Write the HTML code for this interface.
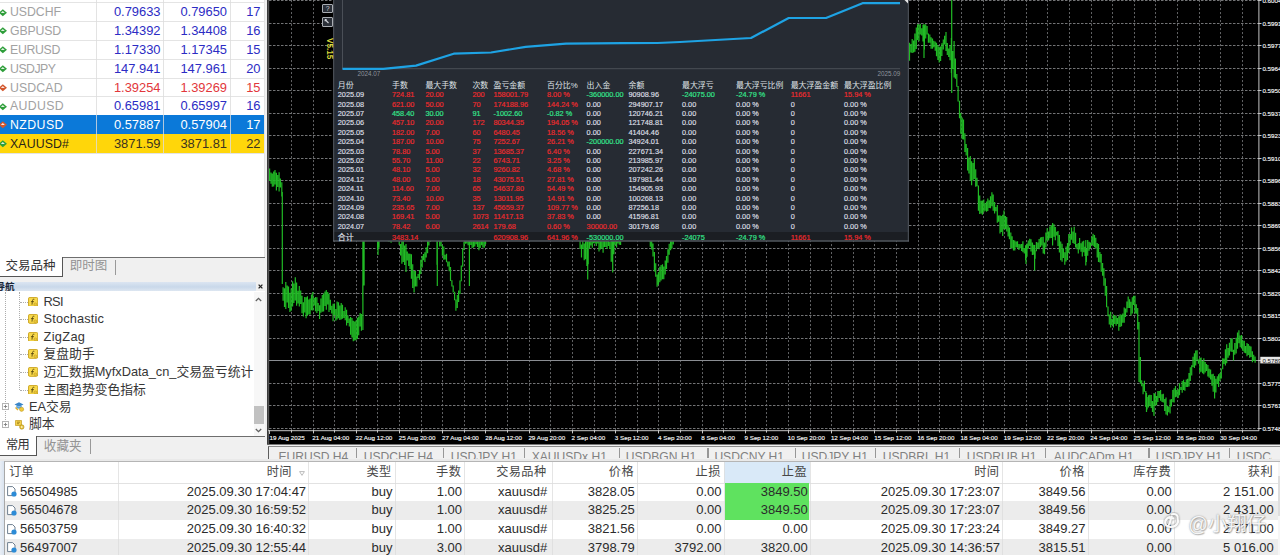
<!DOCTYPE html><html lang="zh-CN"><head><meta charset="utf-8"><title>MT4</title><style>
html,body{margin:0;padding:0}
body{width:1280px;height:555px;overflow:hidden;background:#f0f0f0;position:relative;font-family:'Liberation Sans','Noto Sans CJK SC',sans-serif;-webkit-font-smoothing:antialiased}
i{display:block;position:absolute}
#left{position:absolute;left:0;top:0;width:267px;height:459px;background:#f0f0f0}
#mw{position:absolute;left:0;top:0;width:263.5px;height:257px;background:#fff;overflow:hidden;border-right:1px solid #e3e3e3}
.mr{position:absolute;left:0;width:263.5px;height:18.8px;border-top:1px solid #e4e4e4;box-sizing:border-box;font-size:12.9px;line-height:18.8px;color:#2c2cc4}
.mr .ic{position:absolute;left:-.3px;top:4.3px}
.mr .sy{position:absolute;left:10px;color:#a2a2a2;font-size:12.3px}
.mr .c1{position:absolute;right:103px}
.mr .c2{position:absolute;right:36.5px}
.mr .c3{position:absolute;right:3px}
.rr{color:#e2373b}
.rsel{background:#0b79d9;color:#fff;border-top-color:#0b79d9}
.rsel .sy{color:#fff}
.rgold{background:#ffd60a;color:#3a3320;border-top-color:#ffd60a}
.rgold .sy{color:#2a2418}
.vl{top:0;width:1px;height:153px;background:#dcdcdc;opacity:.8}
#mwend{position:absolute;left:0;top:152.8px;width:263.5px;height:1px;background:#e4e4e4}
#tabs1{position:absolute;left:0;top:257px;width:264.5px;height:24px;background:#f0f0f0;border-top:1.4px solid #6e6e6e;box-sizing:border-box;font-size:12.5px}
#tabs1 .act{position:absolute;left:-1px;top:-1.4px;width:63.8px;height:20.2px;background:#fff;border-right:1.5px solid #555;border-bottom:1.5px solid #555;color:#333;line-height:18.5px;padding-left:6.5px;box-sizing:border-box;letter-spacing:0}
#tabs1 .in{position:absolute;left:69.8px;top:0;color:#939393;line-height:17.5px;letter-spacing:0}
#tabs1 .sp{position:absolute;left:114.5px;top:2px;width:1px;height:15px;background:#999}
#nav{position:absolute;left:0;top:0;width:264.5px;height:459px;pointer-events:none}
.nh{position:absolute;left:0;top:281.5px;width:256px;height:9.5px;background:linear-gradient(#dbe5f1,#c9d8ea 55%,#dde6f1);font-size:9.6px;line-height:9.5px;color:#1a2738}
.nh b{position:absolute;left:-4.5px;top:0}
.nx{position:absolute;left:258px;top:-1.5px;font-size:12px;font-weight:bold;color:#222;line-height:12px}
#navbody{position:absolute;left:0;top:291px;width:264.5px;height:145px;background:#fff}
.tv{width:0;border-left:1px dotted #adadad}
.th{height:0;border-top:1px dotted #adadad}
.fi{position:absolute}
.nt{position:absolute;font-size:12.8px;line-height:18px;color:#363636;white-space:nowrap}
.sb{position:absolute;left:253.5px;top:292px;width:11px;height:144px;background:#f7f7f7}
.sth{position:absolute;left:0.5px;top:113.5px;width:10px;height:18.5px;background:#c1c1c1}
#tabs2{position:absolute;left:0;top:436px;width:264.5px;height:23px;background:#f0f0f0;border-top:1.4px solid #6e6e6e;box-sizing:border-box;font-size:13px}
#tabs2 .act{position:absolute;left:-1px;top:-1.4px;width:37.5px;height:20px;background:#fff;border-right:1.5px solid #555;border-bottom:1.5px solid #555;color:#333;line-height:18.5px;padding-left:7px;box-sizing:border-box;font-size:12.2px;letter-spacing:-.6px}
#tabs2 .in{position:absolute;left:43.8px;top:0.5px;color:#949494;line-height:17px;font-size:12.6px}
#tabs2 .sp{position:absolute;left:90px;top:2px;width:1px;height:15px;background:#999}
#ctabs{position:absolute;left:267.6px;top:445.9px;width:1012.4px;height:12.9px;background:#f0f0f0;border-top:1px solid #8c8c8c;border-left:1.3px solid #5e5e5e;overflow:hidden;font-size:12.1px;color:#818181;box-sizing:border-box}
#ctabs span{position:absolute;top:3.7px;line-height:13px;white-space:nowrap}
#ctabs .sep{top:1.2px;width:1.2px;height:10px;background:#979797}
#term{position:absolute;left:4px;top:461px;width:1276px;height:94px;background:#fff;border-left:1px solid #a8a8a8;border-top:1px solid #b5b5b5;overflow:hidden;box-sizing:border-box}
.thd{position:absolute;left:0;top:0;width:1276px;height:20.5px;border-bottom:1px solid #e2e2e2;font-size:12.2px;color:#484848}
.th2{position:absolute;top:0;height:20.5px;line-height:21.5px;box-sizing:border-box;letter-spacing:.4px}
.th2.hl{background:#d9e9f8}
.tr{position:absolute;left:0;width:1276px;height:18.8px;font-size:13px;color:#2b2b2b}
.tr.alt{background:#ececec}
.td{position:absolute;top:0;height:18.8px;line-height:18.3px;text-align:right;box-sizing:border-box;white-space:nowrap}
.tvl{top:0;width:1px;height:96px;background:#dcdcdc;opacity:.75}
.tsb{position:absolute;left:1273px;top:0;width:3px;height:96px;background:#f6f6f6}
.tsb div{position:absolute;left:0;top:14px;width:3px;height:40px;background:#dedede}
.btn{position:absolute;left:322.3px;width:10.9px;height:9.2px;box-sizing:border-box;border:1px solid #a9adb3;background:#2b3038;border-radius:1px;color:#c9ccd1;font-size:7px;line-height:7px;text-align:center}
#ver{position:absolute;left:324.2px;top:37.6px;width:24px;height:9px;font-size:8.2px;font-weight:bold;line-height:9px;color:#dcdb3e;transform-origin:0 0;transform:translate(9.5px,0) rotate(90deg);letter-spacing:0}
#wm{position:absolute;left:1188.3px;top:510.5px;font-size:19.6px;line-height:26px;color:rgba(255,255,255,.93);text-shadow:0 0 1.5px rgba(90,90,90,.75),1px 1px 1px rgba(120,120,120,.45);white-space:nowrap;letter-spacing:-.3px}
</style></head><body><div id="left"></div><div id="mw"><div class="mr rb" style="top:2.3px"><svg class="ic" width="9" height="9.4" viewBox="0 0 8 10" preserveAspectRatio="none"><path d="M-1 5L2.5 1.2L6.2 5L2.5 8.8Z" fill="#2e9e3a"/><path d="M2.5 3.2L4.3 5.3H0.7Z" fill="#fff" opacity=".85"/></svg><span class="sy" style="letter-spacing:-0.04px">USDCHF</span><span class="c1">0.79633</span><span class="c2">0.79650</span><span class="c3">17</span></div><div class="mr rb" style="top:21.1px"><svg class="ic" width="9" height="9.4" viewBox="0 0 8 10" preserveAspectRatio="none"><path d="M-1 5L2.5 1.2L6.2 5L2.5 8.8Z" fill="#2e9e3a"/><path d="M2.5 3.2L4.3 5.3H0.7Z" fill="#fff" opacity=".85"/></svg><span class="sy" style="letter-spacing:-0.16px">GBPUSD</span><span class="c1">1.34392</span><span class="c2">1.34408</span><span class="c3">16</span></div><div class="mr rb" style="top:39.9px"><svg class="ic" width="9" height="9.4" viewBox="0 0 8 10" preserveAspectRatio="none"><path d="M-1 5L2.5 1.2L6.2 5L2.5 8.8Z" fill="#2e9e3a"/><path d="M2.5 3.2L4.3 5.3H0.7Z" fill="#fff" opacity=".85"/></svg><span class="sy" style="letter-spacing:-0.32px">EURUSD</span><span class="c1">1.17330</span><span class="c2">1.17345</span><span class="c3">15</span></div><div class="mr rb" style="top:58.7px"><svg class="ic" width="9" height="9.4" viewBox="0 0 8 10" preserveAspectRatio="none"><path d="M-1 5L2.5 1.2L6.2 5L2.5 8.8Z" fill="#2e9e3a"/><path d="M2.5 3.2L4.3 5.3H0.7Z" fill="#fff" opacity=".85"/></svg><span class="sy" style="letter-spacing:-0.50px">USDJPY</span><span class="c1">147.941</span><span class="c2">147.961</span><span class="c3">20</span></div><div class="mr rr" style="top:77.5px"><svg class="ic" width="9" height="9.4" viewBox="0 0 8 10" preserveAspectRatio="none"><path d="M-1 5L2.5 1.2L6.2 5L2.5 8.8Z" fill="#d2562c"/><path d="M2.5 3.2L4.3 5.3H0.7Z" fill="#fff" opacity=".85"/></svg><span class="sy" style="letter-spacing:0.13px">USDCAD</span><span class="c1">1.39254</span><span class="c2">1.39269</span><span class="c3">15</span></div><div class="mr rb" style="top:96.3px"><svg class="ic" width="9" height="9.4" viewBox="0 0 8 10" preserveAspectRatio="none"><path d="M-1 5L2.5 1.2L6.2 5L2.5 8.8Z" fill="#2e9e3a"/><path d="M2.5 3.2L4.3 5.3H0.7Z" fill="#fff" opacity=".85"/></svg><span class="sy" style="letter-spacing:0.33px">AUDUSD</span><span class="c1">0.65981</span><span class="c2">0.65997</span><span class="c3">16</span></div><div class="mr rsel" style="top:115.1px"><svg class="ic" width="9" height="9.4" viewBox="0 0 8 10" preserveAspectRatio="none"><path d="M-1 5L2.5 1.2L6.2 5L2.5 8.8Z" fill="#d2562c"/><path d="M2.5 3.2L4.3 5.3H0.7Z" fill="#fff" opacity=".85"/></svg><span class="sy" style="letter-spacing:0.44px">NZDUSD</span><span class="c1">0.57887</span><span class="c2">0.57904</span><span class="c3">17</span></div><div class="mr rgold" style="top:133.9px"><svg class="ic" width="9" height="9.4" viewBox="0 0 8 10" preserveAspectRatio="none"><path d="M-1 5L2.5 1.2L6.2 5L2.5 8.8Z" fill="#2e9e3a"/><path d="M2.5 3.2L4.3 5.3H0.7Z" fill="#fff" opacity=".85"/></svg><span class="sy" style="letter-spacing:0.13px">XAUUSD#</span><span class="c1">3871.59</span><span class="c2">3871.81</span><span class="c3">22</span></div><i class="vl" style="left:96px"></i><i class="vl" style="left:163px"></i><i class="vl" style="left:229.5px"></i></div><div id="mwend"></div><div id="tabs1"><div class="act">交易品种</div><span class="in">即时图</span><i class="sp"></i></div><div id="navbody"></div><div id="nav"><div class="nh"><b>导航</b><svg class="fi" style="left:257.5px;top:2.6px" width="5" height="5" viewBox="0 0 5 5"><path d="M.6 .6L4.4 4.4M4.4 .6L.6 4.4" stroke="#222" stroke-width="1.3"/></svg></div><i class="tv" style="left:5px;top:292px;height:134px"></i><i class="tv" style="left:19px;top:292px;height:98px"></i><i class="th" style="left:20px;top:301.5px;width:8px"></i><svg class="fi" style="left:28px;top:296.5px" width="10.2" height="9.8" viewBox="0 0 11 11" preserveAspectRatio="none"><rect x=".5" y=".5" width="10" height="10" rx="1.5" fill="#f7d84a" stroke="#c9a21c"/><path d="M6.8 2.6C5.4 2.2 4.9 3 4.8 4.2L4.3 8.6M3.2 5.2H6.4" stroke="#5a4a10" stroke-width="1" fill="none"/><circle cx="8" cy="8.2" r="1.6" fill="#e9c53a" stroke="#b8941a" stroke-width=".5"/></svg><span class="nt" style="left:43.5px;top:292.5px;letter-spacing:-0.70px">RSI</span><i class="th" style="left:20px;top:319.1px;width:8px"></i><svg class="fi" style="left:28px;top:314.1px" width="10.2" height="9.8" viewBox="0 0 11 11" preserveAspectRatio="none"><rect x=".5" y=".5" width="10" height="10" rx="1.5" fill="#f7d84a" stroke="#c9a21c"/><path d="M6.8 2.6C5.4 2.2 4.9 3 4.8 4.2L4.3 8.6M3.2 5.2H6.4" stroke="#5a4a10" stroke-width="1" fill="none"/><circle cx="8" cy="8.2" r="1.6" fill="#e9c53a" stroke="#b8941a" stroke-width=".5"/></svg><span class="nt" style="left:43.5px;top:310.1px;letter-spacing:0.15px">Stochastic</span><i class="th" style="left:20px;top:336.7px;width:8px"></i><svg class="fi" style="left:28px;top:331.7px" width="10.2" height="9.8" viewBox="0 0 11 11" preserveAspectRatio="none"><rect x=".5" y=".5" width="10" height="10" rx="1.5" fill="#f7d84a" stroke="#c9a21c"/><path d="M6.8 2.6C5.4 2.2 4.9 3 4.8 4.2L4.3 8.6M3.2 5.2H6.4" stroke="#5a4a10" stroke-width="1" fill="none"/><circle cx="8" cy="8.2" r="1.6" fill="#e9c53a" stroke="#b8941a" stroke-width=".5"/></svg><span class="nt" style="left:43.5px;top:327.7px;letter-spacing:0.33px">ZigZag</span><i class="th" style="left:20px;top:354.3px;width:8px"></i><svg class="fi" style="left:28px;top:349.3px" width="10.2" height="9.8" viewBox="0 0 11 11" preserveAspectRatio="none"><rect x=".5" y=".5" width="10" height="10" rx="1.5" fill="#f7d84a" stroke="#c9a21c"/><path d="M6.8 2.6C5.4 2.2 4.9 3 4.8 4.2L4.3 8.6M3.2 5.2H6.4" stroke="#5a4a10" stroke-width="1" fill="none"/><circle cx="8" cy="8.2" r="1.6" fill="#e9c53a" stroke="#b8941a" stroke-width=".5"/></svg><span class="nt" style="left:43.5px;top:345.3px;letter-spacing:0.00px">复盘助手</span><i class="th" style="left:20px;top:371.9px;width:8px"></i><svg class="fi" style="left:28px;top:366.9px" width="10.2" height="9.8" viewBox="0 0 11 11" preserveAspectRatio="none"><rect x=".5" y=".5" width="10" height="10" rx="1.5" fill="#f7d84a" stroke="#c9a21c"/><path d="M6.8 2.6C5.4 2.2 4.9 3 4.8 4.2L4.3 8.6M3.2 5.2H6.4" stroke="#5a4a10" stroke-width="1" fill="none"/><circle cx="8" cy="8.2" r="1.6" fill="#e9c53a" stroke="#b8941a" stroke-width=".5"/></svg><span class="nt" style="left:43.5px;top:362.9px;letter-spacing:0.00px">迈汇数据MyfxData_cn_交易盈亏统计</span><i class="th" style="left:20px;top:389.5px;width:8px"></i><svg class="fi" style="left:28px;top:384.5px" width="10.2" height="9.8" viewBox="0 0 11 11" preserveAspectRatio="none"><rect x=".5" y=".5" width="10" height="10" rx="1.5" fill="#f7d84a" stroke="#c9a21c"/><path d="M6.8 2.6C5.4 2.2 4.9 3 4.8 4.2L4.3 8.6M3.2 5.2H6.4" stroke="#5a4a10" stroke-width="1" fill="none"/><circle cx="8" cy="8.2" r="1.6" fill="#e9c53a" stroke="#b8941a" stroke-width=".5"/></svg><span class="nt" style="left:43.5px;top:380.5px;letter-spacing:0.00px">主图趋势变色指标</span><svg class="fi" style="left:1.5px;top:403.0px" width="7" height="7" viewBox="0 0 7 7"><rect x=".5" y=".5" width="6" height="6" fill="#fff" stroke="#b4b4b4"/><path d="M1.8 3.5H5.2M3.5 1.8V5.2" stroke="#808080" stroke-width=".9"/></svg><svg class="fi" style="left:14px;top:401.0px" width="11" height="11" viewBox="0 0 11 11"><path d="M0.500 3.600L5 1.200L9.500 3.600L5 5.800Z" fill="#3b86c8"/><path d="M2.300 4.600V6.800C3.600 8 6.400 8 7.700 6.800V4.600L5 6Z" fill="#5aa3dc"/><circle cx="7.600" cy="8.300" r="2.100" fill="#f0c93a" stroke="#b8941a" stroke-width=".5"/><path d="M1.500 6.500l2.500 2.600" stroke="#e0b030" stroke-width="1.400"/></svg><span class="nt" style="left:29px;top:397.5px">EA交易</span><svg class="fi" style="left:1.5px;top:420.8px" width="7" height="7" viewBox="0 0 7 7"><rect x=".5" y=".5" width="6" height="6" fill="#fff" stroke="#b4b4b4"/><path d="M1.8 3.5H5.2M3.5 1.8V5.2" stroke="#808080" stroke-width=".9"/></svg><svg class="fi" style="left:14px;top:418.8px" width="11" height="11" viewBox="0 0 11 11"><path d="M1.500 1.500H7.500V6.500H1.500Z" fill="#f3d04a" stroke="#c29a1c" stroke-width=".7"/><path d="M3 3.200H6M3 4.700H5" stroke="#8a6d10" stroke-width=".7"/><circle cx="7.800" cy="8" r="2.200" fill="#e9c53a" stroke="#a88718" stroke-width=".6"/><circle cx="7.800" cy="8" r=".8" fill="#fff"/></svg><span class="nt" style="left:29px;top:415.3px">脚本</span><div class="sb"><svg width="7" height="5" style="position:absolute;left:1.6px;top:5px" viewBox="0 0 7 5"><path d="M.8 4L3.5 1.3L6.2 4" stroke="#606060" stroke-width="1.3" fill="none"/></svg><div class="sth"></div><svg width="7" height="5" style="position:absolute;left:1.6px;top:136px" viewBox="0 0 7 5"><path d="M.8 1L3.5 3.7L6.2 1" stroke="#606060" stroke-width="1.3" fill="none"/></svg></div></div><div id="tabs2"><div class="act">常用</div><span class="in">收藏夹</span><i class="sp"></i></div><svg class="chart" width="1013" height="444.5" viewBox="267 0 1013 444.5" style="position:absolute;left:267px;top:0"><rect x="267" y="0" width="1013" height="444.5" fill="#000"/><rect x="267.3" y="0" width="1.9" height="444.5" fill="#555"/><path d="M291.5 0V430M313.5 0V430M334.5 0V430M356.5 0V430M377.5 0V430M399.5 0V430M421.5 0V430M442.5 0V430M464.5 0V430M485.5 0V430M507.5 0V430M529.5 0V430M550.5 0V430M572.5 0V430M594.5 0V430M615.5 0V430M637.5 0V430M658.5 0V430M680.5 0V430M702.5 0V430M723.5 0V430M745.5 0V430M766.5 0V430M788.5 0V430M810.5 0V430M831.5 0V430M853.5 0V430M874.5 0V430M896.5 0V430M918.5 0V430M939.5 0V430M961.5 0V430M983.5 0V430M1004.5 0V430M1026.5 0V430M1047.5 0V430M1069.5 0V430M1091.5 0V430M1112.5 0V430M1134.5 0V430M1155.5 0V430M1177.5 0V430M1199.5 0V430M1220.5 0V430M1242.5 0V430" stroke="#5f6062" stroke-width="1" stroke-dasharray="2.1 1.9" fill="none"/><path d="M269 0.5H1258M269 23.5H1258M269 45.5H1258M269 68.5H1258M269 90.5H1258M269 113.5H1258M269 135.5H1258M269 158.5H1258M269 180.5H1258M269 203.5H1258M269 225.5H1258M269 248.5H1258M269 270.5H1258M269 293.5H1258M269 315.5H1258M269 338.5H1258M269 360.5H1258M269 383.5H1258M269 405.5H1258M269 428.5H1258" stroke="#737476" stroke-width="1" stroke-dasharray="2.5 1.5" fill="none"/><path d="M269 360.5H1258" stroke="#8a8d92" stroke-width="1"/><path d="M269.6 168.6V181.0M271.0 172.6V183.8M272.3 173.6V186.8M273.7 171.4V186.6M275.0 170.0V184.5M276.4 172.8V190.6M277.7 175.0V186.9M279.1 172.3V191.6M280.4 178.6V187.6M281.8 182.2V196.4M283.1 287.2V300.8M284.5 288.3V307.0M285.8 282.0V309.0M287.2 285.5V302.6M288.5 286.5V307.9M289.9 292.7V312.0M291.2 288.5V310.7M292.6 281.3V306.6M293.9 283.6V303.0M295.3 277.3V300.6M296.6 282.6V305.8M298.0 290.8V303.4M299.3 286.1V306.4M300.7 290.6V303.9M302.0 295.8V313.2M303.4 302.3V316.4M304.7 296.9V312.6M306.1 297.3V318.2M307.4 296.3V315.8M308.8 299.6V314.4M310.1 298.5V314.5M311.5 294.6V310.3M312.8 292.1V310.6M314.2 298.1V305.4M315.5 297.0V311.3M316.9 297.2V312.9M318.2 302.9V311.1M319.6 305.3V318.9M320.9 298.6V312.7M322.3 295.1V311.7M323.6 293.6V311.5M325.0 291.6V305.9M326.3 290.1V309.7M327.7 292.1V304.5M329.0 293.8V312.0M330.4 299.7V310.1M331.7 305.8V313.5M333.1 303.8V321.2M334.4 303.6V315.3M335.8 309.1V320.7M337.1 301.4V319.5M338.5 302.3V318.2M339.8 305.4V320.0M341.2 303.1V319.5M342.5 304.8V318.8M343.9 310.9V318.1M345.2 307.2V320.3M346.6 309.8V325.4M347.9 315.3V323.0M349.3 318.6V326.4M350.6 316.9V334.7M352.0 318.1V337.4M353.3 320.7V341.3M354.7 321.6V340.5M356.0 320.6V340.3M357.4 317.7V339.0M358.7 316.4V335.2M360.1 312.9V326.6M361.4 314.1V330.7M362.8 284.6V300.2M364.1 231.0V285.4M376.3 233.9V237.1M377.6 233.8V249.7M379.0 231.1V247.8M380.3 230.6V239.6M388.4 233.9V241.6M389.8 232.0V241.4M391.1 232.4V242.8M392.5 231.4V240.0M399.2 236.4V244.7M400.6 243.9V255.5M401.9 238.9V263.7M403.3 240.0V262.0M404.6 245.5V265.1M406.0 243.9V272.0M407.3 251.6V260.5M408.7 253.4V265.9M410.0 253.7V268.9M411.4 254.3V278.7M412.7 264.2V288.0M414.1 271.0V292.6M415.4 271.1V286.6M416.8 276.5V286.6M418.1 273.9V278.1M419.5 270.1V279.8M420.8 259.7V274.1M422.2 256.1V267.5M423.5 253.9V260.3M424.9 252.2V261.9M426.2 247.3V257.6M427.6 240.6V253.3M428.9 241.2V245.6M430.3 234.5V242.0M437.0 235.8V264.7M438.4 234.6V241.3M439.7 240.3V246.4M441.1 238.9V246.3M442.4 245.3V255.8M443.8 246.4V259.7M445.1 254.8V259.5M446.5 253.8V262.2M447.8 261.4V266.6M449.2 261.5V271.2M450.5 267.0V281.1M451.9 280.3V286.4M453.2 285.6V292.6M454.6 291.8V300.3M455.9 299.5V310.7M457.3 295.1V307.9M458.6 290.6V301.9M460.0 280.4V294.1M461.3 265.4V281.2M462.7 249.0V266.8M464.0 241.6V250.1M465.4 236.6V243.7M466.7 235.5V243.4M468.1 235.5V245.3M469.4 240.8V285.0M470.8 236.0V244.9M472.1 236.2V247.9M473.5 239.2V247.6M474.8 236.7V246.6M476.2 237.6V244.2M477.5 236.1V247.1M478.9 236.5V250.2M480.2 239.6V248.1M481.6 237.9V245.3M482.9 240.5V247.4M484.3 238.3V247.8M485.6 235.8V244.2M487.0 231.2V238.9M578.8 233.3V240.5M580.1 239.5V249.1M581.5 244.4V257.4M582.8 239.1V249.0M584.2 243.5V260.2M585.5 236.2V259.3M586.9 236.7V266.1M588.2 237.4V264.3M589.6 241.2V248.6M590.9 236.2V245.6M592.3 238.4V247.8M593.6 240.0V243.3M595.0 236.3V243.4M596.3 236.9V245.9M597.7 240.4V243.5M599.0 236.3V251.5M600.4 237.8V249.4M601.7 236.3V248.4M603.1 239.9V252.8M604.4 237.8V246.9M605.8 236.0V247.1M607.1 238.7V248.9M608.5 236.1V246.1M609.8 241.9V248.9M611.2 239.2V261.8M612.5 238.4V262.3M613.9 237.0V254.2M615.2 237.2V244.8M616.6 239.5V247.4M617.9 236.2V243.4M619.3 237.7V244.7M620.6 234.3V244.9M622.0 232.3V239.3M649.0 234.1V241.2M650.3 239.4V246.8M651.7 238.0V249.5M653.0 243.4V256.6M654.4 252.1V271.5M655.7 263.2V276.8M657.1 274.4V286.8M658.4 272.2V284.7M659.8 266.8V282.3M661.1 264.9V280.5M662.5 264.3V279.2M663.8 266.4V279.2M665.2 260.4V274.4M666.5 255.9V269.0M667.9 249.2V262.7M669.2 243.8V254.7M670.6 237.2V250.2M671.9 240.6V248.4M673.3 237.9V244.6M674.6 232.3V238.7M909.5 42.8V60.7M910.9 44.0V52.5M912.2 39.0V53.0M913.6 40.4V52.6M914.9 33.6V51.7M916.3 27.5V49.0M917.6 24.3V40.1M919.0 24.6V41.2M920.3 23.7V34.4M921.7 28.2V35.5M923.0 24.8V41.4M924.4 25.3V49.5M925.7 24.2V38.6M927.1 26.0V34.4M928.4 33.6V42.8M929.8 34.6V42.8M931.1 37.3V48.7M932.5 38.5V48.7M933.8 40.7V47.2M935.2 41.4V50.7M936.5 42.8V56.2M937.9 44.9V60.1M939.2 46.8V62.6M940.6 46.6V61.1M941.9 43.3V55.9M943.3 39.4V49.6M944.6 35.7V44.4M946.0 32.1V51.1M947.3 43.1V55.0M948.7 48.6V56.9M950.0 45.4V60.3M951.4 37.9V73.0M952.7 51.1V69.0M954.1 41.0V77.6M955.4 58.4V78.7M956.8 73.9V86.7M958.1 85.9V101.5M959.5 100.7V118.3M960.8 113.1V133.7M962.2 117.4V139.3M963.5 119.5V139.6M964.9 133.2V151.9M966.2 144.1V155.6M967.6 148.0V170.5M968.9 157.4V173.6M970.3 155.9V180.4M971.6 161.2V185.3M973.0 163.0V180.6M974.3 159.0V179.0M975.7 169.2V186.7M977.0 177.8V186.2M978.4 185.4V210.8M979.7 195.5V214.1M981.1 200.8V213.4M982.4 200.5V214.7M983.8 199.4V212.3M985.1 203.2V210.8M986.5 201.4V211.7M987.8 198.6V211.1M989.2 200.2V207.9M990.5 196.3V208.3M991.9 192.2V206.2M993.2 194.6V210.7M994.6 202.1V213.5M995.9 207.1V211.2M997.3 204.9V222.8M998.6 215.5V221.7M1000.0 215.2V233.6M1001.3 216.0V232.1M1002.7 214.7V235.9M1004.0 210.6V229.3M1005.4 216.0V229.3M1006.7 217.0V231.6M1008.1 224.8V236.4M1009.4 227.6V239.2M1010.8 232.6V248.0M1012.1 236.2V248.5M1013.5 240.1V250.6M1014.8 240.5V250.4M1016.2 241.4V247.3M1017.5 241.2V247.8M1018.9 244.1V249.9M1020.2 244.3V248.3M1021.6 244.0V251.1M1022.9 241.2V252.2M1024.3 248.0V253.5M1025.6 245.6V260.3M1027.0 243.4V256.7M1028.3 240.5V248.8M1029.7 238.8V246.0M1031.0 239.3V251.5M1032.4 242.5V255.1M1033.7 244.7V254.7M1035.1 250.5V258.7M1036.4 242.0V251.3M1037.8 242.4V248.4M1039.1 239.0V249.3M1040.5 237.6V247.1M1041.8 237.0V245.6M1043.2 236.7V253.5M1044.5 242.6V254.3M1045.9 232.5V247.5M1047.2 228.3V240.6M1048.6 231.4V240.6M1049.9 226.5V238.3M1051.3 225.3V237.9M1052.6 223.1V245.5M1054.0 224.3V236.7M1055.3 227.0V240.2M1056.7 231.7V235.6M1058.0 231.0V246.0M1059.4 234.9V252.6M1060.7 241.6V260.2M1062.1 243.7V261.8M1063.4 248.5V258.1M1064.8 252.2V264.7M1066.1 246.6V261.5M1067.5 242.9V259.9M1068.8 233.9V253.0M1070.2 234.1V245.0M1071.5 227.6V239.7M1072.9 231.6V242.9M1074.2 226.8V244.1M1075.6 232.8V247.6M1076.9 244.0V249.2M1078.3 243.1V253.6M1079.6 237.9V249.5M1081.0 243.2V251.7M1082.3 241.5V256.4M1083.7 240.8V252.2M1085.0 246.7V255.9M1086.4 249.1V262.0M1087.7 240.1V255.8M1089.1 241.8V250.8M1090.4 242.4V247.9M1091.8 236.5V245.0M1093.1 233.7V246.1M1094.5 234.9V247.2M1095.8 237.7V248.6M1097.2 243.1V257.5M1098.5 243.9V261.9M1099.9 252.0V262.5M1101.2 254.1V271.8M1102.6 262.9V275.8M1103.9 268.3V285.7M1105.3 278.2V295.8M1106.6 286.1V307.3M1108.0 306.5V316.3M1109.3 314.6V324.4M1110.7 311.7V327.5M1112.0 319.1V325.0M1113.4 314.4V327.5M1114.7 315.7V324.1M1116.1 315.6V325.7M1117.4 317.9V324.0M1118.8 316.2V330.7M1120.1 314.2V327.0M1121.5 314.8V326.3M1122.8 313.6V322.8M1124.2 307.6V322.7M1125.5 308.5V316.9M1126.9 301.5V312.5M1128.2 296.6V307.9M1129.6 299.3V308.0M1130.9 301.8V315.5M1132.3 297.2V313.6M1133.6 295.7V305.0M1135.0 295.8V313.6M1136.3 304.3V313.8M1137.7 308.1V329.6M1139.0 337.5V357.9M1140.4 357.1V383.8M1141.7 380.3V386.3M1143.1 383.9V394.2M1144.4 380.8V391.8M1145.8 391.0V407.0M1147.1 397.1V409.5M1148.5 395.2V407.4M1149.8 394.8V406.0M1151.2 394.9V408.1M1152.5 401.0V412.1M1153.9 402.2V415.1M1155.2 393.8V405.7M1156.6 396.1V405.2M1157.9 390.9V402.0M1159.3 391.1V398.0M1160.6 390.1V400.7M1162.0 394.3V402.1M1163.3 393.8V402.4M1164.7 399.0V411.0M1166.0 397.4V414.4M1167.4 406.0V415.5M1168.7 406.5V412.2M1170.1 399.6V413.5M1171.4 399.0V406.5M1172.8 389.9V402.2M1174.1 388.3V402.6M1175.5 385.9V397.2M1176.8 390.1V396.7M1178.2 389.2V397.9M1179.5 383.2V395.3M1180.9 387.0V390.1M1182.2 381.1V392.7M1183.6 379.7V389.9M1184.9 381.9V390.7M1186.3 379.4V387.1M1187.6 378.8V386.9M1189.0 373.1V386.6M1190.3 367.2V380.9M1191.7 365.3V375.6M1193.0 356.8V366.9M1194.4 353.3V368.0M1195.7 350.5V365.5M1197.1 350.2V360.4M1198.4 359.4V363.8M1199.8 357.9V372.6M1201.1 357.4V371.8M1202.5 361.0V373.3M1203.8 358.2V374.2M1205.2 362.1V372.5M1206.5 364.1V370.9M1207.9 365.0V376.5M1209.2 368.7V377.7M1210.6 369.4V379.5M1211.9 374.2V385.8M1213.2 373.7V391.8M1214.6 376.0V390.8M1215.9 378.7V392.6M1217.3 376.3V384.0M1218.6 374.2V387.0M1220.0 373.0V381.1M1221.3 368.4V378.5M1222.7 358.3V369.2M1224.0 358.4V363.9M1225.4 349.2V365.6M1226.7 344.3V363.2M1228.1 348.1V357.8M1229.4 342.7V355.6M1230.8 338.7V351.6M1232.1 338.3V352.1M1233.5 349.7V360.5M1234.8 342.9V354.7M1236.2 337.7V353.4M1237.5 332.4V348.7M1238.9 330.2V343.2M1240.2 335.4V347.3M1241.6 335.1V348.6M1242.9 340.5V351.0M1244.3 340.8V352.8M1245.6 345.9V353.2M1247.0 343.0V356.2M1248.3 344.1V355.1M1249.7 345.8V357.8M1251.0 346.4V357.1M1252.4 351.2V362.3M1253.7 354.7V361.1M1255.1 356.4V362.8M951.7 0.0V93.0M924.0 24.0V58.0M437.3 238.0V286.0M469.4 238.0V286.0M587.7 238.0V279.5M612.7 238.0V272.5M1026.0 245.0V264.0M1034.6 245.0V270.5M282.3 192.0V284.0M362.9 238.0V330.0M1139.0 322.0V382.0M1214.6 376.0V398.4M1146.5 393.0V412.0M1154.0 393.0V416.0M1085.8 240.0V265.5M378.0 236.0V255.0" stroke="#21bb25" stroke-width="1.2" fill="none" style="filter:blur(0.3px)"/><path d="M1258.9 0V431M268 430.7H1259" stroke="#c4c4c4" stroke-width="1"/><path d="M1258 0.5h3.5M1258 23.5h3.5M1258 45.5h3.5M1258 68.5h3.5M1258 90.5h3.5M1258 113.5h3.5M1258 135.5h3.5M1258 158.5h3.5M1258 180.5h3.5M1258 203.5h3.5M1258 225.5h3.5M1258 248.5h3.5M1258 270.5h3.5M1258 293.5h3.5M1258 315.5h3.5M1258 338.5h3.5M1258 360.5h3.5M1258 383.5h3.5M1258 405.5h3.5M1258 428.5h3.5M291.5 430v2.6M313.5 430v3.4M334.5 430v2.6M356.5 430v3.4M377.5 430v2.6M399.5 430v3.4M421.5 430v2.6M442.5 430v3.4M464.5 430v2.6M485.5 430v3.4M507.5 430v2.6M529.5 430v3.4M550.5 430v2.6M572.5 430v3.4M594.5 430v2.6M615.5 430v3.4M637.5 430v2.6M658.5 430v3.4M680.5 430v2.6M702.5 430v3.4M723.5 430v2.6M745.5 430v3.4M766.5 430v2.6M788.5 430v3.4M810.5 430v2.6M831.5 430v3.4M853.5 430v2.6M874.5 430v3.4M896.5 430v2.6M918.5 430v3.4M939.5 430v2.6M961.5 430v3.4M983.5 430v2.6M1004.5 430v3.4M1026.5 430v2.6M1047.5 430v3.4M1069.5 430v2.6M1091.5 430v3.4M1112.5 430v2.6M1134.5 430v3.4M1155.5 430v2.6M1177.5 430v3.4M1199.5 430v2.6M1220.5 430v3.4M1242.5 430v2.6M269.5 430v4" stroke="#c8c8c8" stroke-width="1"/><g font-family="Liberation Sans,sans-serif" font-size="6.25" fill="#f6f6f6" stroke="#f6f6f6" stroke-width=".15"><text x="1262.4" y="2.9">0.6004</text><text x="1262.4" y="25.9">0.5991</text><text x="1262.4" y="47.9">0.5977</text><text x="1262.4" y="70.9">0.5964</text><text x="1262.4" y="92.9">0.5950</text><text x="1262.4" y="115.9">0.5937</text><text x="1262.4" y="137.9">0.5923</text><text x="1262.4" y="160.9">0.5910</text><text x="1262.4" y="182.9">0.5896</text><text x="1262.4" y="205.9">0.5883</text><text x="1262.4" y="227.9">0.5869</text><text x="1262.4" y="250.9">0.5856</text><text x="1262.4" y="272.9">0.5842</text><text x="1262.4" y="295.9">0.5829</text><text x="1262.4" y="317.9">0.5815</text><text x="1262.4" y="340.9">0.5802</text><text x="1262.4" y="385.9">0.5775</text><text x="1262.4" y="407.9">0.5761</text><text x="1262.4" y="430.9">0.5748</text><text x="269.6" y="439.5">19 Aug 2025</text><text x="312.3" y="439.5">21 Aug 04:00</text><text x="355.5" y="439.5">22 Aug 12:00</text><text x="398.7" y="439.5">25 Aug 20:00</text><text x="442.0" y="439.5">27 Aug 04:00</text><text x="485.2" y="439.5">28 Aug 12:00</text><text x="528.4" y="439.5">29 Aug 20:00</text><text x="571.6" y="439.5">2 Sep 04:00</text><text x="614.8" y="439.5">3 Sep 12:00</text><text x="658.1" y="439.5">4 Sep 20:00</text><text x="701.3" y="439.5">8 Sep 04:00</text><text x="744.5" y="439.5">9 Sep 12:00</text><text x="787.7" y="439.5">10 Sep 20:00</text><text x="830.9" y="439.5">12 Sep 04:00</text><text x="874.2" y="439.5">15 Sep 12:00</text><text x="917.4" y="439.5">16 Sep 20:00</text><text x="960.6" y="439.5">18 Sep 04:00</text><text x="1003.8" y="439.5">19 Sep 12:00</text><text x="1047.0" y="439.5">22 Sep 20:00</text><text x="1090.3" y="439.5">24 Sep 04:00</text><text x="1133.5" y="439.5">25 Sep 12:00</text><text x="1176.7" y="439.5">26 Sep 20:00</text><text x="1219.9" y="439.5">30 Sep 04:00</text></g><rect x="1260.3" y="356.8" width="20" height="6.6" fill="#e6e6e6"/><text x="1262.4" y="362.6" font-family="Liberation Sans,sans-serif" font-size="6.25" fill="#111">0.5789</text></svg><svg width="576" height="242" viewBox="333 0 576 242" style="position:absolute;left:333px;top:0"><rect x="333" y="0" width="576" height="241.3" fill="#262b33"/><rect x="333" y="232" width="576" height="9.3" fill="#1b1e23"/><path d="M333.7 0V241.3M908.3 0V241.3" stroke="#50555d" stroke-width="1"/><path d="M333 241H909" stroke="#6b7078" stroke-width="1"/><path d="M342.5 0V69M342.5 68.7H900" stroke="#4a4f57" stroke-width="1" fill="none"/><polyline points="342.5,68.9 383.4,68.9 416.0,65.6 453.7,53.7 491.0,52.5 525.6,46.9 566.0,43.7 622.5,43.1 657.5,43.0 680.0,42.0 751.0,38.0 788.7,18.0 826.0,18.0 862.5,3.2 900.0,3.2" fill="none" stroke="#1ea3e4" stroke-width="2.2" stroke-linejoin="round"/><g font-family="Liberation Sans,Noto Sans CJK SC,sans-serif" font-size="6.3" fill="#8d939b"><text x="357.5" y="75.8">2024.07</text><text x="877.5" y="75.8">2025.09</text></g><g font-family="Liberation Sans,Noto Sans CJK SC,sans-serif" font-size="7.3" stroke-width=".18"><text x="337.8" y="87.6" fill="#dfe2e6" font-size="7.9">月份</text><text x="392.0" y="87.6" fill="#dfe2e6" font-size="7.9">手数</text><text x="425.4" y="87.6" fill="#dfe2e6" font-size="7.9">最大手数</text><text x="472.4" y="87.6" fill="#dfe2e6" font-size="7.9">次数</text><text x="493.5" y="87.6" fill="#dfe2e6" font-size="7.9">盈亏金额</text><text x="547.0" y="87.6" fill="#dfe2e6" font-size="7.9">百分比%</text><text x="586.6" y="87.6" fill="#dfe2e6" font-size="7.9">出入金</text><text x="628.5" y="87.6" fill="#dfe2e6" font-size="7.9">余额</text><text x="682.0" y="87.6" fill="#dfe2e6" font-size="7.9">最大浮亏</text><text x="736.0" y="87.6" fill="#dfe2e6" font-size="7.9">最大浮亏比例</text><text x="790.7" y="87.6" fill="#dfe2e6" font-size="7.9">最大浮盈金额</text><text x="844.0" y="87.6" fill="#dfe2e6" font-size="7.9">最大浮盈比例</text><text x="337.8" y="97.1" fill="#dadde1" stroke="#dadde1">2025.09</text><text x="392.0" y="97.1" fill="#ee2a2e" stroke="#ee2a2e">724.81</text><text x="425.4" y="97.1" fill="#ee2a2e" stroke="#ee2a2e">20.00</text><text x="472.4" y="97.1" fill="#ee2a2e" stroke="#ee2a2e">200</text><text x="493.5" y="97.1" fill="#ee2a2e" stroke="#ee2a2e">158001.79</text><text x="547.0" y="97.1" fill="#ee2a2e" stroke="#ee2a2e">8.00 %</text><text x="586.6" y="97.1" fill="#35e58d" stroke="#35e58d">-360000.00</text><text x="628.5" y="97.1" fill="#dadde1" stroke="#dadde1">90908.96</text><text x="682.0" y="97.1" fill="#35e58d" stroke="#35e58d">-24075.00</text><text x="736.0" y="97.1" fill="#35e58d" stroke="#35e58d">-24.79 %</text><text x="790.7" y="97.1" fill="#ee2a2e" stroke="#ee2a2e">11661</text><text x="844.0" y="97.1" fill="#ee2a2e" stroke="#ee2a2e">15.94 %</text><text x="337.8" y="106.5" fill="#dadde1" stroke="#dadde1">2025.08</text><text x="392.0" y="106.5" fill="#ee2a2e" stroke="#ee2a2e">621.00</text><text x="425.4" y="106.5" fill="#ee2a2e" stroke="#ee2a2e">50.00</text><text x="472.4" y="106.5" fill="#ee2a2e" stroke="#ee2a2e">70</text><text x="493.5" y="106.5" fill="#ee2a2e" stroke="#ee2a2e">174188.96</text><text x="547.0" y="106.5" fill="#ee2a2e" stroke="#ee2a2e">144.24 %</text><text x="586.6" y="106.5" fill="#dadde1" stroke="#dadde1">0.00</text><text x="628.5" y="106.5" fill="#dadde1" stroke="#dadde1">294907.17</text><text x="682.0" y="106.5" fill="#dadde1" stroke="#dadde1">0.00</text><text x="736.0" y="106.5" fill="#dadde1" stroke="#dadde1">0.00 %</text><text x="790.7" y="106.5" fill="#dadde1" stroke="#dadde1">0</text><text x="844.0" y="106.5" fill="#dadde1" stroke="#dadde1">0.00 %</text><text x="337.8" y="115.9" fill="#dadde1" stroke="#dadde1">2025.07</text><text x="392.0" y="115.9" fill="#35e58d" stroke="#35e58d">458.40</text><text x="425.4" y="115.9" fill="#35e58d" stroke="#35e58d">30.00</text><text x="472.4" y="115.9" fill="#35e58d" stroke="#35e58d">91</text><text x="493.5" y="115.9" fill="#35e58d" stroke="#35e58d">-1002.60</text><text x="547.0" y="115.9" fill="#35e58d" stroke="#35e58d">-0.82 %</text><text x="586.6" y="115.9" fill="#dadde1" stroke="#dadde1">0.00</text><text x="628.5" y="115.9" fill="#dadde1" stroke="#dadde1">120746.21</text><text x="682.0" y="115.9" fill="#dadde1" stroke="#dadde1">0.00</text><text x="736.0" y="115.9" fill="#dadde1" stroke="#dadde1">0.00 %</text><text x="790.7" y="115.9" fill="#dadde1" stroke="#dadde1">0</text><text x="844.0" y="115.9" fill="#dadde1" stroke="#dadde1">0.00 %</text><text x="337.8" y="125.3" fill="#dadde1" stroke="#dadde1">2025.06</text><text x="392.0" y="125.3" fill="#ee2a2e" stroke="#ee2a2e">457.10</text><text x="425.4" y="125.3" fill="#ee2a2e" stroke="#ee2a2e">20.00</text><text x="472.4" y="125.3" fill="#ee2a2e" stroke="#ee2a2e">172</text><text x="493.5" y="125.3" fill="#ee2a2e" stroke="#ee2a2e">80344.35</text><text x="547.0" y="125.3" fill="#ee2a2e" stroke="#ee2a2e">194.05 %</text><text x="586.6" y="125.3" fill="#dadde1" stroke="#dadde1">0.00</text><text x="628.5" y="125.3" fill="#dadde1" stroke="#dadde1">121748.81</text><text x="682.0" y="125.3" fill="#dadde1" stroke="#dadde1">0.00</text><text x="736.0" y="125.3" fill="#dadde1" stroke="#dadde1">0.00 %</text><text x="790.7" y="125.3" fill="#dadde1" stroke="#dadde1">0</text><text x="844.0" y="125.3" fill="#dadde1" stroke="#dadde1">0.00 %</text><text x="337.8" y="134.7" fill="#dadde1" stroke="#dadde1">2025.05</text><text x="392.0" y="134.7" fill="#ee2a2e" stroke="#ee2a2e">182.00</text><text x="425.4" y="134.7" fill="#ee2a2e" stroke="#ee2a2e">7.00</text><text x="472.4" y="134.7" fill="#ee2a2e" stroke="#ee2a2e">60</text><text x="493.5" y="134.7" fill="#ee2a2e" stroke="#ee2a2e">6480.45</text><text x="547.0" y="134.7" fill="#ee2a2e" stroke="#ee2a2e">18.56 %</text><text x="586.6" y="134.7" fill="#dadde1" stroke="#dadde1">0.00</text><text x="628.5" y="134.7" fill="#dadde1" stroke="#dadde1">41404.46</text><text x="682.0" y="134.7" fill="#dadde1" stroke="#dadde1">0.00</text><text x="736.0" y="134.7" fill="#dadde1" stroke="#dadde1">0.00 %</text><text x="790.7" y="134.7" fill="#dadde1" stroke="#dadde1">0</text><text x="844.0" y="134.7" fill="#dadde1" stroke="#dadde1">0.00 %</text><text x="337.8" y="144.1" fill="#dadde1" stroke="#dadde1">2025.04</text><text x="392.0" y="144.1" fill="#ee2a2e" stroke="#ee2a2e">187.00</text><text x="425.4" y="144.1" fill="#ee2a2e" stroke="#ee2a2e">10.00</text><text x="472.4" y="144.1" fill="#ee2a2e" stroke="#ee2a2e">75</text><text x="493.5" y="144.1" fill="#ee2a2e" stroke="#ee2a2e">7252.67</text><text x="547.0" y="144.1" fill="#ee2a2e" stroke="#ee2a2e">26.21 %</text><text x="586.6" y="144.1" fill="#35e58d" stroke="#35e58d">-200000.00</text><text x="628.5" y="144.1" fill="#dadde1" stroke="#dadde1">34924.01</text><text x="682.0" y="144.1" fill="#dadde1" stroke="#dadde1">0.00</text><text x="736.0" y="144.1" fill="#dadde1" stroke="#dadde1">0.00 %</text><text x="790.7" y="144.1" fill="#dadde1" stroke="#dadde1">0</text><text x="844.0" y="144.1" fill="#dadde1" stroke="#dadde1">0.00 %</text><text x="337.8" y="153.6" fill="#dadde1" stroke="#dadde1">2025.03</text><text x="392.0" y="153.6" fill="#ee2a2e" stroke="#ee2a2e">78.80</text><text x="425.4" y="153.6" fill="#ee2a2e" stroke="#ee2a2e">5.00</text><text x="472.4" y="153.6" fill="#ee2a2e" stroke="#ee2a2e">37</text><text x="493.5" y="153.6" fill="#ee2a2e" stroke="#ee2a2e">13685.37</text><text x="547.0" y="153.6" fill="#ee2a2e" stroke="#ee2a2e">6.40 %</text><text x="586.6" y="153.6" fill="#dadde1" stroke="#dadde1">0.00</text><text x="628.5" y="153.6" fill="#dadde1" stroke="#dadde1">227671.34</text><text x="682.0" y="153.6" fill="#dadde1" stroke="#dadde1">0.00</text><text x="736.0" y="153.6" fill="#dadde1" stroke="#dadde1">0.00 %</text><text x="790.7" y="153.6" fill="#dadde1" stroke="#dadde1">0</text><text x="844.0" y="153.6" fill="#dadde1" stroke="#dadde1">0.00 %</text><text x="337.8" y="163.0" fill="#dadde1" stroke="#dadde1">2025.02</text><text x="392.0" y="163.0" fill="#ee2a2e" stroke="#ee2a2e">55.70</text><text x="425.4" y="163.0" fill="#ee2a2e" stroke="#ee2a2e">11.00</text><text x="472.4" y="163.0" fill="#ee2a2e" stroke="#ee2a2e">22</text><text x="493.5" y="163.0" fill="#ee2a2e" stroke="#ee2a2e">6743.71</text><text x="547.0" y="163.0" fill="#ee2a2e" stroke="#ee2a2e">3.25 %</text><text x="586.6" y="163.0" fill="#dadde1" stroke="#dadde1">0.00</text><text x="628.5" y="163.0" fill="#dadde1" stroke="#dadde1">213985.97</text><text x="682.0" y="163.0" fill="#dadde1" stroke="#dadde1">0.00</text><text x="736.0" y="163.0" fill="#dadde1" stroke="#dadde1">0.00 %</text><text x="790.7" y="163.0" fill="#dadde1" stroke="#dadde1">0</text><text x="844.0" y="163.0" fill="#dadde1" stroke="#dadde1">0.00 %</text><text x="337.8" y="172.4" fill="#dadde1" stroke="#dadde1">2025.01</text><text x="392.0" y="172.4" fill="#ee2a2e" stroke="#ee2a2e">48.10</text><text x="425.4" y="172.4" fill="#ee2a2e" stroke="#ee2a2e">5.00</text><text x="472.4" y="172.4" fill="#ee2a2e" stroke="#ee2a2e">32</text><text x="493.5" y="172.4" fill="#ee2a2e" stroke="#ee2a2e">9260.82</text><text x="547.0" y="172.4" fill="#ee2a2e" stroke="#ee2a2e">4.68 %</text><text x="586.6" y="172.4" fill="#dadde1" stroke="#dadde1">0.00</text><text x="628.5" y="172.4" fill="#dadde1" stroke="#dadde1">207242.26</text><text x="682.0" y="172.4" fill="#dadde1" stroke="#dadde1">0.00</text><text x="736.0" y="172.4" fill="#dadde1" stroke="#dadde1">0.00 %</text><text x="790.7" y="172.4" fill="#dadde1" stroke="#dadde1">0</text><text x="844.0" y="172.4" fill="#dadde1" stroke="#dadde1">0.00 %</text><text x="337.8" y="181.8" fill="#dadde1" stroke="#dadde1">2024.12</text><text x="392.0" y="181.8" fill="#ee2a2e" stroke="#ee2a2e">48.00</text><text x="425.4" y="181.8" fill="#ee2a2e" stroke="#ee2a2e">5.00</text><text x="472.4" y="181.8" fill="#ee2a2e" stroke="#ee2a2e">18</text><text x="493.5" y="181.8" fill="#ee2a2e" stroke="#ee2a2e">43075.51</text><text x="547.0" y="181.8" fill="#ee2a2e" stroke="#ee2a2e">27.81 %</text><text x="586.6" y="181.8" fill="#dadde1" stroke="#dadde1">0.00</text><text x="628.5" y="181.8" fill="#dadde1" stroke="#dadde1">197981.44</text><text x="682.0" y="181.8" fill="#dadde1" stroke="#dadde1">0.00</text><text x="736.0" y="181.8" fill="#dadde1" stroke="#dadde1">0.00 %</text><text x="790.7" y="181.8" fill="#dadde1" stroke="#dadde1">0</text><text x="844.0" y="181.8" fill="#dadde1" stroke="#dadde1">0.00 %</text><text x="337.8" y="191.2" fill="#dadde1" stroke="#dadde1">2024.11</text><text x="392.0" y="191.2" fill="#ee2a2e" stroke="#ee2a2e">114.60</text><text x="425.4" y="191.2" fill="#ee2a2e" stroke="#ee2a2e">7.00</text><text x="472.4" y="191.2" fill="#ee2a2e" stroke="#ee2a2e">65</text><text x="493.5" y="191.2" fill="#ee2a2e" stroke="#ee2a2e">54637.80</text><text x="547.0" y="191.2" fill="#ee2a2e" stroke="#ee2a2e">54.49 %</text><text x="586.6" y="191.2" fill="#dadde1" stroke="#dadde1">0.00</text><text x="628.5" y="191.2" fill="#dadde1" stroke="#dadde1">154905.93</text><text x="682.0" y="191.2" fill="#dadde1" stroke="#dadde1">0.00</text><text x="736.0" y="191.2" fill="#dadde1" stroke="#dadde1">0.00 %</text><text x="790.7" y="191.2" fill="#dadde1" stroke="#dadde1">0</text><text x="844.0" y="191.2" fill="#dadde1" stroke="#dadde1">0.00 %</text><text x="337.8" y="200.6" fill="#dadde1" stroke="#dadde1">2024.10</text><text x="392.0" y="200.6" fill="#ee2a2e" stroke="#ee2a2e">73.40</text><text x="425.4" y="200.6" fill="#ee2a2e" stroke="#ee2a2e">10.00</text><text x="472.4" y="200.6" fill="#ee2a2e" stroke="#ee2a2e">35</text><text x="493.5" y="200.6" fill="#ee2a2e" stroke="#ee2a2e">13011.95</text><text x="547.0" y="200.6" fill="#ee2a2e" stroke="#ee2a2e">14.91 %</text><text x="586.6" y="200.6" fill="#dadde1" stroke="#dadde1">0.00</text><text x="628.5" y="200.6" fill="#dadde1" stroke="#dadde1">100268.13</text><text x="682.0" y="200.6" fill="#dadde1" stroke="#dadde1">0.00</text><text x="736.0" y="200.6" fill="#dadde1" stroke="#dadde1">0.00 %</text><text x="790.7" y="200.6" fill="#dadde1" stroke="#dadde1">0</text><text x="844.0" y="200.6" fill="#dadde1" stroke="#dadde1">0.00 %</text><text x="337.8" y="210.0" fill="#dadde1" stroke="#dadde1">2024.09</text><text x="392.0" y="210.0" fill="#ee2a2e" stroke="#ee2a2e">235.65</text><text x="425.4" y="210.0" fill="#ee2a2e" stroke="#ee2a2e">7.00</text><text x="472.4" y="210.0" fill="#ee2a2e" stroke="#ee2a2e">137</text><text x="493.5" y="210.0" fill="#ee2a2e" stroke="#ee2a2e">45659.37</text><text x="547.0" y="210.0" fill="#ee2a2e" stroke="#ee2a2e">109.77 %</text><text x="586.6" y="210.0" fill="#dadde1" stroke="#dadde1">0.00</text><text x="628.5" y="210.0" fill="#dadde1" stroke="#dadde1">87256.18</text><text x="682.0" y="210.0" fill="#dadde1" stroke="#dadde1">0.00</text><text x="736.0" y="210.0" fill="#dadde1" stroke="#dadde1">0.00 %</text><text x="790.7" y="210.0" fill="#dadde1" stroke="#dadde1">0</text><text x="844.0" y="210.0" fill="#dadde1" stroke="#dadde1">0.00 %</text><text x="337.8" y="219.4" fill="#dadde1" stroke="#dadde1">2024.08</text><text x="392.0" y="219.4" fill="#ee2a2e" stroke="#ee2a2e">169.41</text><text x="425.4" y="219.4" fill="#ee2a2e" stroke="#ee2a2e">5.00</text><text x="472.4" y="219.4" fill="#ee2a2e" stroke="#ee2a2e">1073</text><text x="493.5" y="219.4" fill="#ee2a2e" stroke="#ee2a2e">11417.13</text><text x="547.0" y="219.4" fill="#ee2a2e" stroke="#ee2a2e">37.83 %</text><text x="586.6" y="219.4" fill="#dadde1" stroke="#dadde1">0.00</text><text x="628.5" y="219.4" fill="#dadde1" stroke="#dadde1">41596.81</text><text x="682.0" y="219.4" fill="#dadde1" stroke="#dadde1">0.00</text><text x="736.0" y="219.4" fill="#dadde1" stroke="#dadde1">0.00 %</text><text x="790.7" y="219.4" fill="#dadde1" stroke="#dadde1">0</text><text x="844.0" y="219.4" fill="#dadde1" stroke="#dadde1">0.00 %</text><text x="337.8" y="228.8" fill="#dadde1" stroke="#dadde1">2024.07</text><text x="392.0" y="228.8" fill="#ee2a2e" stroke="#ee2a2e">78.42</text><text x="425.4" y="228.8" fill="#ee2a2e" stroke="#ee2a2e">6.00</text><text x="472.4" y="228.8" fill="#ee2a2e" stroke="#ee2a2e">2614</text><text x="493.5" y="228.8" fill="#ee2a2e" stroke="#ee2a2e">179.68</text><text x="547.0" y="228.8" fill="#ee2a2e" stroke="#ee2a2e">0.60 %</text><text x="586.6" y="228.8" fill="#ee2a2e" stroke="#ee2a2e">30000.00</text><text x="628.5" y="228.8" fill="#dadde1" stroke="#dadde1">30179.68</text><text x="682.0" y="228.8" fill="#dadde1" stroke="#dadde1">0.00</text><text x="736.0" y="228.8" fill="#dadde1" stroke="#dadde1">0.00 %</text><text x="790.7" y="228.8" fill="#dadde1" stroke="#dadde1">0</text><text x="844.0" y="228.8" fill="#dadde1" stroke="#dadde1">0.00 %</text><text x="337.8" y="240.2" fill="#dadde1" stroke="#dadde1" font-size="7.9">合计</text><text x="392.0" y="240.2" fill="#ee2a2e" stroke="#ee2a2e">3483.14</text><text x="493.5" y="240.2" fill="#ee2a2e" stroke="#ee2a2e">620908.96</text><text x="547.0" y="240.2" fill="#ee2a2e" stroke="#ee2a2e">641.96 %</text><text x="586.6" y="240.2" fill="#35e58d" stroke="#35e58d">-530000.00</text><text x="682.0" y="240.2" fill="#35e58d" stroke="#35e58d">-24075</text><text x="736.0" y="240.2" fill="#35e58d" stroke="#35e58d">-24.79 %</text><text x="790.7" y="240.2" fill="#ee2a2e" stroke="#ee2a2e">11661</text><text x="844.0" y="240.2" fill="#ee2a2e" stroke="#ee2a2e">15.94 %</text></g><path d="M904.5 0H908V3.5Z" fill="#e8e8e8"/></svg><div class="btn" style="top:3.6px">?</div><div class="btn" style="top:17.4px"><svg width="8" height="7" viewBox="0 0 8 7" style="display:block"><path d="M2 1.5L5.5 5M2 1.5l1.8.2M2 1.5l.2 1.8" stroke="#d0d3d8" stroke-width="1.1" fill="none"/></svg></div><div id="ver">V5.15</div><div style="position:absolute;left:0;top:458.6px;width:1280px;height:2.4px;background:#e9e9e9"></div><div style="position:absolute;left:0;top:461px;width:4px;height:94px;background:linear-gradient(90deg,#e9eef5,#d9e3ef)"></div><div id="ctabs"><span style="left:9.8px">EURUSD H4</span><i class="sep" style="left:87.7px"></i><span style="left:95.1px">USDCHF H4</span><i class="sep" style="left:174.6px"></i><span style="left:182.1px">USDJPY H1</span><i class="sep" style="left:255.1px"></i><span style="left:263.1px">XAUUSDx H1</span><i class="sep" style="left:350.1px"></i><span style="left:357.1px">USDBGN H1</span><i class="sep" style="left:438.8px"></i><span style="left:445.8px">USDCNY H1</span><i class="sep" style="left:526.1px"></i><span style="left:533.1px">USDJPY H1</span><i class="sep" style="left:606.1px"></i><span style="left:614.1px">USDBRL H1</span><i class="sep" style="left:690.1px"></i><span style="left:698.1px">USDRUB H1</span><i class="sep" style="left:776.7px"></i><span style="left:785.1px">AUDCADm H1</span><i class="sep" style="left:879.8px"></i><span style="left:887.1px">USDJPY H1</span><i class="sep" style="left:960.1px"></i><span style="left:968.1px;width:35.5px;overflow:hidden">USDCAD H1</span><i class="sep" style="left:1131.1px"></i></div><div id="term"><div class="thd"><div class="th2" style="left:0.0px;width:113.0px;padding-left:4px;text-align:left">订单</div><div class="th2" style="left:113.0px;width:190.4px;padding-right:16.5px;text-align:right">时间</div><div class="th2" style="left:303.4px;width:86.3px;padding-right:3px;text-align:right">类型</div><div class="th2" style="left:389.7px;width:69.6px;padding-right:3px;text-align:right">手数</div><div class="th2" style="left:459.3px;width:87.2px;padding-right:5px;text-align:right">交易品种</div><div class="th2" style="left:546.5px;width:85.5px;padding-right:3px;text-align:right">价格</div><div class="th2" style="left:632.0px;width:86.8px;padding-right:3px;text-align:right">止损</div><div class="th2 hl" style="left:718.8px;width:86.2px;padding-right:3px;text-align:right">止盈</div><div class="th2" style="left:805.0px;width:192.4px;padding-right:3px;text-align:right">时间</div><div class="th2" style="left:997.4px;width:85.4px;padding-right:3px;text-align:right">价格</div><div class="th2" style="left:1082.8px;width:86.2px;padding-right:3px;text-align:right">库存费</div><div class="th2" style="left:1169.0px;width:102.0px;padding-right:3px;text-align:right">获利</div><svg style="position:absolute;left:293.5px;top:8.5px" width="6" height="5" viewBox="0 0 6 5"><path d="M.6 .6H5.4L3 4.4Z" fill="none" stroke="#b4b4b4" stroke-width=".9"/></svg></div><div class="tr" style="top:20.5px"><svg style="position:absolute;left:2.2px;top:3.6px" width="10" height="11" viewBox="0 0 10 11"><path d="M.6 .6H5.6L8 3V9.6H.6Z" fill="#fff" stroke="#6f7f90" stroke-width="1"/><circle cx="7" cy="8" r="2.6" fill="#2c8bd6"/></svg><div class="td" style="left:15px;width:98px;text-align:left">56504985</div><div class="td" style="left:114.0px;width:188.4px;padding-right:1.3px">2025.09.30 17:04:47</div><div class="td" style="left:304.4px;width:84.3px;padding-right:1.3px">buy</div><div class="td" style="left:390.7px;width:67.6px;padding-right:1.3px">1.00</div><div class="td" style="left:460.3px;width:85.2px;padding-right:3.3px">xauusd#</div><div class="td" style="left:547.5px;width:83.5px;padding-right:1.3px">3828.05</div><div class="td" style="left:633.0px;width:84.8px;padding-right:1.3px">0.00</div><div class="td" style="left:719.8px;width:84.2px;padding-right:1.3px;background:#5fe25f">3849.50</div><div class="td" style="left:806.0px;width:190.4px;padding-right:1.3px">2025.09.30 17:23:07</div><div class="td" style="left:998.4px;width:83.4px;padding-right:1.3px">3849.56</div><div class="td" style="left:1083.8px;width:84.2px;padding-right:1.3px">0.00</div><div class="td" style="left:1170.0px;width:100.0px;padding-right:1.3px">2 151.00</div></div><div class="tr alt" style="top:39.3px"><svg style="position:absolute;left:2.2px;top:3.6px" width="10" height="11" viewBox="0 0 10 11"><path d="M.6 .6H5.6L8 3V9.6H.6Z" fill="#fff" stroke="#6f7f90" stroke-width="1"/><circle cx="7" cy="8" r="2.6" fill="#2c8bd6"/></svg><div class="td" style="left:15px;width:98px;text-align:left">56504678</div><div class="td" style="left:114.0px;width:188.4px;padding-right:1.3px">2025.09.30 16:59:52</div><div class="td" style="left:304.4px;width:84.3px;padding-right:1.3px">buy</div><div class="td" style="left:390.7px;width:67.6px;padding-right:1.3px">1.00</div><div class="td" style="left:460.3px;width:85.2px;padding-right:3.3px">xauusd#</div><div class="td" style="left:547.5px;width:83.5px;padding-right:1.3px">3825.25</div><div class="td" style="left:633.0px;width:84.8px;padding-right:1.3px">0.00</div><div class="td" style="left:719.8px;width:84.2px;padding-right:1.3px;background:#5fe25f">3849.50</div><div class="td" style="left:806.0px;width:190.4px;padding-right:1.3px">2025.09.30 17:23:07</div><div class="td" style="left:998.4px;width:83.4px;padding-right:1.3px">3849.56</div><div class="td" style="left:1083.8px;width:84.2px;padding-right:1.3px">0.00</div><div class="td" style="left:1170.0px;width:100.0px;padding-right:1.3px">2 431.00</div></div><div class="tr" style="top:58.1px"><svg style="position:absolute;left:2.2px;top:3.6px" width="10" height="11" viewBox="0 0 10 11"><path d="M.6 .6H5.6L8 3V9.6H.6Z" fill="#fff" stroke="#6f7f90" stroke-width="1"/><circle cx="7" cy="8" r="2.6" fill="#2c8bd6"/></svg><div class="td" style="left:15px;width:98px;text-align:left">56503759</div><div class="td" style="left:114.0px;width:188.4px;padding-right:1.3px">2025.09.30 16:40:32</div><div class="td" style="left:304.4px;width:84.3px;padding-right:1.3px">buy</div><div class="td" style="left:390.7px;width:67.6px;padding-right:1.3px">1.00</div><div class="td" style="left:460.3px;width:85.2px;padding-right:3.3px">xauusd#</div><div class="td" style="left:547.5px;width:83.5px;padding-right:1.3px">3821.56</div><div class="td" style="left:633.0px;width:84.8px;padding-right:1.3px">0.00</div><div class="td" style="left:719.8px;width:84.2px;padding-right:1.3px">0.00</div><div class="td" style="left:806.0px;width:190.4px;padding-right:1.3px">2025.09.30 17:23:24</div><div class="td" style="left:998.4px;width:83.4px;padding-right:1.3px">3849.27</div><div class="td" style="left:1083.8px;width:84.2px;padding-right:1.3px">0.00</div><div class="td" style="left:1170.0px;width:100.0px;padding-right:1.3px">2 771.00</div></div><div class="tr alt" style="top:76.9px"><svg style="position:absolute;left:2.2px;top:3.6px" width="10" height="11" viewBox="0 0 10 11"><path d="M.6 .6H5.6L8 3V9.6H.6Z" fill="#fff" stroke="#6f7f90" stroke-width="1"/><circle cx="7" cy="8" r="2.6" fill="#2c8bd6"/></svg><div class="td" style="left:15px;width:98px;text-align:left">56497007</div><div class="td" style="left:114.0px;width:188.4px;padding-right:1.3px">2025.09.30 12:55:44</div><div class="td" style="left:304.4px;width:84.3px;padding-right:1.3px">buy</div><div class="td" style="left:390.7px;width:67.6px;padding-right:1.3px">3.00</div><div class="td" style="left:460.3px;width:85.2px;padding-right:3.3px">xauusd#</div><div class="td" style="left:547.5px;width:83.5px;padding-right:1.3px">3798.79</div><div class="td" style="left:633.0px;width:84.8px;padding-right:1.3px">3792.00</div><div class="td" style="left:719.8px;width:84.2px;padding-right:1.3px">3820.00</div><div class="td" style="left:806.0px;width:190.4px;padding-right:1.3px">2025.09.30 14:36:57</div><div class="td" style="left:998.4px;width:83.4px;padding-right:1.3px">3815.51</div><div class="td" style="left:1083.8px;width:84.2px;padding-right:1.3px">0.00</div><div class="td" style="left:1170.0px;width:100.0px;padding-right:1.3px">5 016.00</div></div><i class="tvl" style="left:113.0px"></i><i class="tvl" style="left:303.4px"></i><i class="tvl" style="left:389.7px"></i><i class="tvl" style="left:459.3px"></i><i class="tvl" style="left:546.5px"></i><i class="tvl" style="left:632.0px"></i><i class="tvl" style="left:718.8px"></i><i class="tvl" style="left:805.0px"></i><i class="tvl" style="left:997.4px"></i><i class="tvl" style="left:1082.8px"></i><i class="tvl" style="left:1169.0px"></i><div class="tsb"><div></div></div></div><svg style="position:absolute;left:1163px;top:512px" width="18" height="18" viewBox="0 0 18 18"><path d="M9 2.2c3.9-.9 6.3 1 5.7 4.6 1.4 3.2-.9 7.6-6.2 8.1C3.600 15.400 1.200 12 2.400 9c.7-1.800 2.400-3.600 4.500-3.900M10.400 6.400H7.100M8.800 4.600c-1.400 1.300-1.200 6.600-3 8.200" fill="none" stroke="rgba(255,255,255,.95)" stroke-width="2.1" stroke-linecap="round" style="filter:drop-shadow(0 0 1px rgba(80,80,80,.8))"/></svg><div id="wm">@小翔仔</div></body></html>
